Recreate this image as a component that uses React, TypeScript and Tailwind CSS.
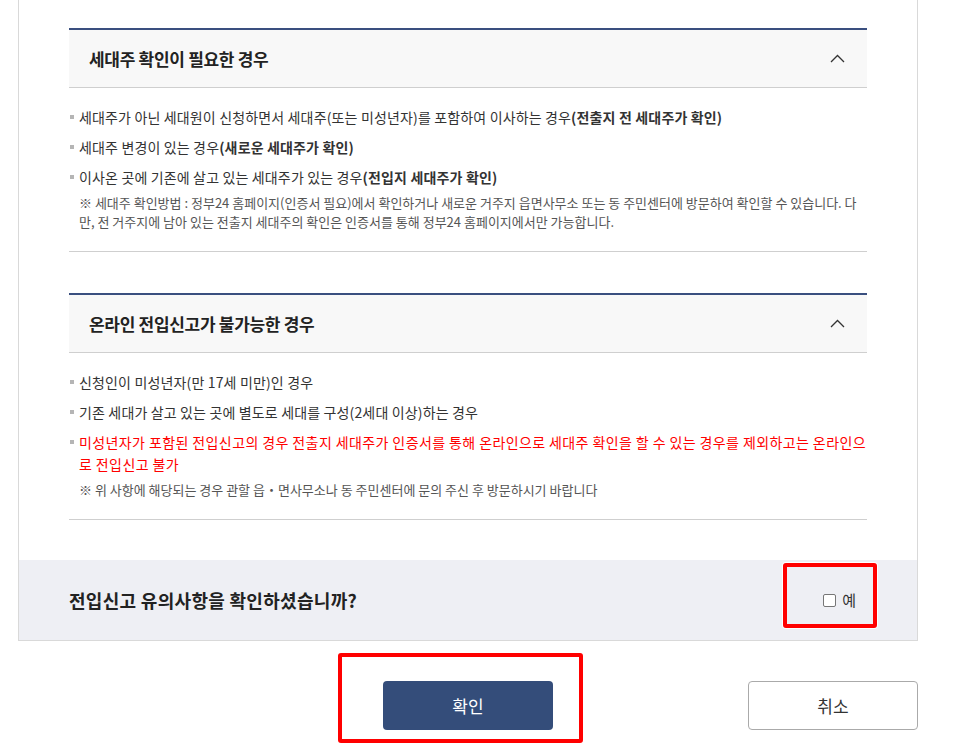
import React from 'react'

const FONT = { fontFamily: '"Noto Sans CJK KR", "Noto Sans", sans-serif' }

function Chevron() {
  return (
    <svg width="15" height="9" viewBox="0 0 15 9" fill="none" className="shrink-0">
      <polyline points="1,8 7.5,1.5 14,8" stroke="#333" strokeWidth="1.3" />
    </svg>
  )
}

function Item({ children, red }: { children: React.ReactNode; red?: boolean }) {
  return (
    <li className="flex py-[4px] leading-[22px]">
      <span className="mt-[9px] ml-[1px] mr-[5px] h-[4px] w-[4px] shrink-0 bg-[#b5b5b5]" />
      <span className={red ? 'tracking-[0.4px] text-[#ff0000]' : 'text-[#333]'}>{children}</span>
    </li>
  )
}

function Section({
  title,
  items,
  note,
  className = '',
}: {
  title: string
  items: React.ReactNode
  note: string
  className?: string
}) {
  return (
    <section className={`border-t-2 border-[#3a4f7f] ${className}`}>
      {/* Header */}
      <div className="flex h-[58px] items-center justify-between border-b border-[#cfcfcf] bg-[#f8f8f8] pl-[20px] pr-[22px]">
        <h3 className="text-[17px] font-bold tracking-[-0.3px] text-[#222]">{title}</h3>
        <Chevron />
      </div>

      {/* Body */}
      <div className="border-b border-[#cfcfcf] pt-[14px] pb-[20px]">
        <ul className="text-[14px] tracking-[0.15px]">{items}</ul>
        <p className="mt-[1px] pl-[10px] text-[13px] leading-[19px] text-[#555]">{note}</p>
      </div>
    </section>
  )
}

export default function App() {
  return (
    <div className="min-h-[750px] bg-white" style={FONT}>
      <div className="ml-[18px] w-[900px] border-x border-b border-[#d9d9d9]">
        <div className="px-[50px] pt-[28px]">
          <Section
            title="세대주 확인이 필요한 경우"
            items={
              <>
                <Item>
                  세대주가 아닌 세대원이 신청하면서 세대주(또는 미성년자)를 포함하여 이사하는 경우
                  <b>(전출지 전 세대주가 확인)</b>
                </Item>
                <Item>
                  세대주 변경이 있는 경우<b>(새로운 세대주가 확인)</b>
                </Item>
                <Item>
                  이사온 곳에 기존에 살고 있는 세대주가 있는 경우<b>(전입지 세대주가 확인)</b>
                </Item>
              </>
            }
            note="※ 세대주 확인방법 : 정부24 홈페이지(인증서 필요)에서 확인하거나 새로운 거주지 읍면사무소 또는 동 주민센터에 방문하여 확인할 수 있습니다. 다만, 전 거주지에 남아 있는 전출지 세대주의 확인은 인증서를 통해 정부24 홈페이지에서만 가능합니다."
          />

          <Section
            className="mt-[41px]"
            title="온라인 전입신고가 불가능한 경우"
            items={
              <>
                <Item>신청인이 미성년자(만 17세 미만)인 경우</Item>
                <Item>기존 세대가 살고 있는 곳에 별도로 세대를 구성(2세대 이상)하는 경우</Item>
                <Item red>
                  미성년자가 포함된 전입신고의 경우 전출지 세대주가 인증서를 통해 온라인으로 세대주 확인을 할 수 있는 경우를 제외하고는 온라인으로 전입신고 불가
                </Item>
              </>
            }
            note="※ 위 사항에 해당되는 경우 관할 읍・면사무소나 동 주민센터에 문의 주신 후 방문하시기 바랍니다"
          />
        </div>

        {/* Confirmation */}
        <div className="mt-[40px] flex h-[80px] items-center justify-between bg-[#eeeff4] pl-[50px] pr-[61px]">
          <p className="text-[18px] font-bold tracking-[0.3px] text-[#222]">전입신고 유의사항을 확인하셨습니까?</p>
          <label className="relative flex items-center gap-[6px] text-[15px] text-[#333]">
            <span className="h-[13px] w-[13px] rounded-[2px] border border-[#767676] bg-white" />
            예
            <span className="pointer-events-none absolute top-[-26px] bottom-[-17px] left-[-40px] right-[-21px] rounded-[3px] border-[4px] border-[#ff0000] ring-1 ring-white" />
          </label>
        </div>
      </div>

      {/* Buttons */}
      <div className="ml-[18px] mt-[40px] grid w-[900px] grid-cols-[1fr_auto_1fr] pb-[20px]">
        <div />
        <div className="relative">
          <button className="h-[49px] w-[170px] rounded-[4px] bg-[#344d7a] text-[17px] text-white">확인</button>
          <span className="pointer-events-none absolute top-[-28px] bottom-[-13px] left-[-45px] right-[-30px] rounded-[3px] border-[4px] border-[#ff0000] ring-1 ring-white" />
        </div>
        <div className="flex justify-end">
          <button className="h-[49px] w-[170px] rounded-[4px] border border-[#aaa] bg-white text-[17px] text-[#333]">
            취소
          </button>
        </div>
      </div>
    </div>
  )
}
